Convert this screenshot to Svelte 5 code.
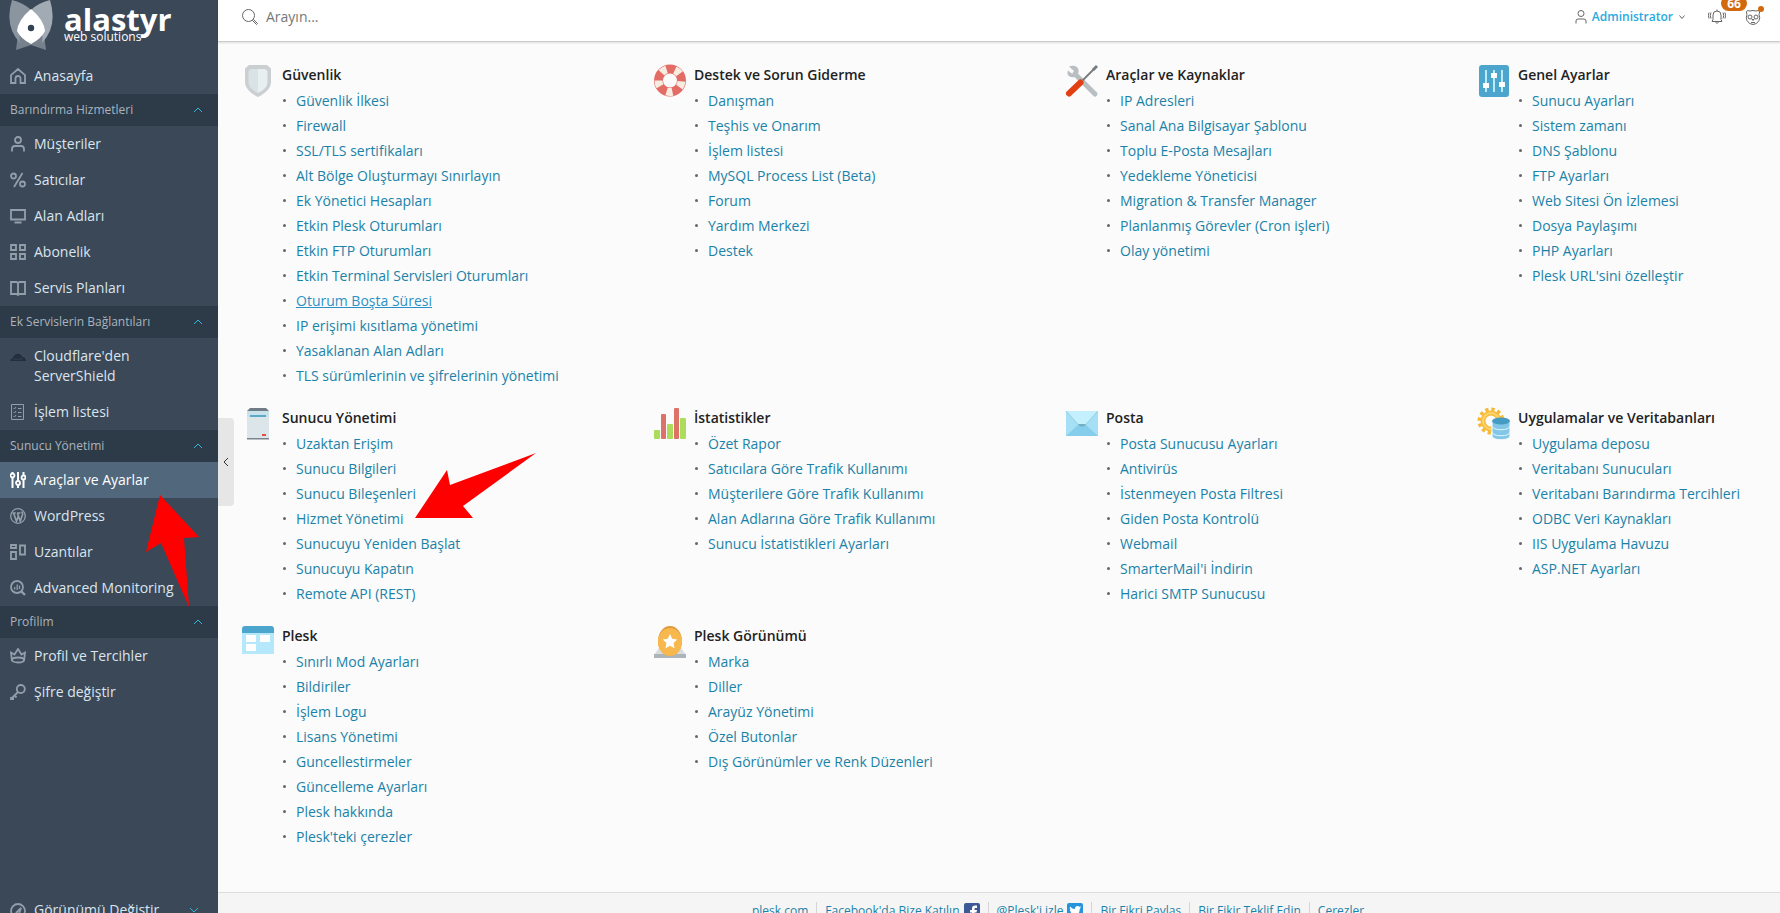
<script lang="ts">
    type Item = { label: string; icon: string; active?: boolean };
    type Group = { title?: string; items: Item[] };
    type Section = { title: string; icon: string; links: string[] };

    const nav: Group[] = [
        { items: [{ label: "Anasayfa", icon: "home" }] },
        {
            title: "Barındırma Hizmetleri",
            items: [
                { label: "Müşteriler", icon: "user" },
                { label: "Satıcılar", icon: "percent" },
                { label: "Alan Adları", icon: "screen" },
                { label: "Abonelik", icon: "grid" },
                { label: "Servis Planları", icon: "book" },
            ],
        },
        {
            title: "Ek Servislerin Bağlantıları",
            items: [
                { label: "Cloudflare'den ServerShield", icon: "cloud" },
                { label: "İşlem listesi", icon: "checklist" },
            ],
        },
        {
            title: "Sunucu Yönetimi",
            items: [
                { label: "Araçlar ve Ayarlar", icon: "sliders", active: true },
                { label: "WordPress", icon: "wordpress" },
                { label: "Uzantılar", icon: "extensions" },
                { label: "Advanced Monitoring", icon: "monitoring" },
            ],
        },
        {
            title: "Profilim",
            items: [
                { label: "Profil ve Tercihler", icon: "crown" },
                { label: "Şifre değiştir", icon: "key" },
            ],
        },
    ];

    const sections: Section[] = [
        {
            title: "Güvenlik",
            icon: "shield",
            links: [
                "Güvenlik İlkesi",
                "Firewall",
                "SSL/TLS sertifikaları",
                "Alt Bölge Oluşturmayı Sınırlayın",
                "Ek Yönetici Hesapları",
                "Etkin Plesk Oturumları",
                "Etkin FTP Oturumları",
                "Etkin Terminal Servisleri Oturumları",
                "Oturum Boşta Süresi",
                "IP erişimi kısıtlama yönetimi",
                "Yasaklanan Alan Adları",
                "TLS sürümlerinin ve şifrelerinin yönetimi",
            ],
        },
        {
            title: "Destek ve Sorun Giderme",
            icon: "lifebuoy",
            links: [
                "Danışman",
                "Teşhis ve Onarım",
                "İşlem listesi",
                "MySQL Process List (Beta)",
                "Forum",
                "Yardım Merkezi",
                "Destek",
            ],
        },
        {
            title: "Araçlar ve Kaynaklar",
            icon: "tools",
            links: [
                "IP Adresleri",
                "Sanal Ana Bilgisayar Şablonu",
                "Toplu E-Posta Mesajları",
                "Yedekleme Yöneticisi",
                "Migration & Transfer Manager",
                "Planlanmış Görevler (Cron işleri)",
                "Olay yönetimi",
            ],
        },
        {
            title: "Genel Ayarlar",
            icon: "settings",
            links: [
                "Sunucu Ayarları",
                "Sistem zamanı",
                "DNS Şablonu",
                "FTP Ayarları",
                "Web Sitesi Ön İzlemesi",
                "Dosya Paylaşımı",
                "PHP Ayarları",
                "Plesk URL'sini özelleştir",
            ],
        },
        {
            title: "Sunucu Yönetimi",
            icon: "server",
            links: [
                "Uzaktan Erişim",
                "Sunucu Bilgileri",
                "Sunucu Bileşenleri",
                "Hizmet Yönetimi",
                "Sunucuyu Yeniden Başlat",
                "Sunucuyu Kapatın",
                "Remote API (REST)",
            ],
        },
        {
            title: "İstatistikler",
            icon: "stats",
            links: [
                "Özet Rapor",
                "Satıcılara Göre Trafik Kullanımı",
                "Müşterilere Göre Trafik Kullanımı",
                "Alan Adlarına Göre Trafik Kullanımı",
                "Sunucu İstatistikleri Ayarları",
            ],
        },
        {
            title: "Posta",
            icon: "mail",
            links: [
                "Posta Sunucusu Ayarları",
                "Antivirüs",
                "İstenmeyen Posta Filtresi",
                "Giden Posta Kontrolü",
                "Webmail",
                "SmarterMail'i İndirin",
                "Harici SMTP Sunucusu",
            ],
        },
        {
            title: "Uygulamalar ve Veritabanları",
            icon: "database",
            links: [
                "Uygulama deposu",
                "Veritabanı Sunucuları",
                "Veritabanı Barındırma Tercihleri",
                "ODBC Veri Kaynakları",
                "IIS Uygulama Havuzu",
                "ASP.NET Ayarları",
            ],
        },
        {
            title: "Plesk",
            icon: "plesk",
            links: [
                "Sınırlı Mod Ayarları",
                "Bildiriler",
                "İşlem Logu",
                "Lisans Yönetimi",
                "Guncellestirmeler",
                "Güncelleme Ayarları",
                "Plesk hakkında",
                "Plesk'teki çerezler",
            ],
        },
        {
            title: "Plesk Görünümü",
            icon: "branding",
            links: [
                "Marka",
                "Diller",
                "Arayüz Yönetimi",
                "Özel Butonlar",
                "Dış Görünümler ve Renk Düzenleri",
            ],
        },
    ];

    const highlighted = "Oturum Boşta Süresi";

    // 16x16, stroked with currentColor
    const navIcons: Record<string, string> = {
        home: `<path d="M1 7.2 8 1l7 6.2V15h-4.5v-4.500a2.500 2.500 0 0 0-5 0V15H1z"/>`,
        user: `<circle cx="8" cy="4" r="3"/><path d="M2 15.500V13a3 3 0 0 1 3-3h6a3 3 0 0 1 3 3v2.500"/>`,
        percent: `<circle cx="3.500" cy="4" r="2.500"/><circle cx="12.500" cy="12" r="2.500"/><path d="M12.500 1 4 15"/>`,
        screen: `<path d="M1 2h14v9.500H1zM4.500 14.500h7"/>`,
        grid: `<path d="M1 1h5v5H1zM10 1h5v5h-5zM1 10h5v5H1zM10 10h5v5h-5z"/>`,
        book: `<path d="M1 2h5.500L8 3l1.500-1H15v12H9.500L8 15l-1.500-1H1zM8 3v12"/>`,
        cloud: `<path d="M0 13c.2-1.700 1.200-2.600 2.600-2.500C3.200 7.700 5.600 5.500 8.200 5.700c2 .1 3.600 1.500 4.200 3.400 2-.2 3.500 1.600 3.600 3.900z" fill="#232f3c" stroke="none"/><path d="M3 11.200h8.500l.6-1.800" stroke="#3b4858" stroke-width=".7"/>`,
        checklist: `<g stroke-width="1"><path d="M1.500.5h12v15h-12z"/><path d="m3.500 4 1 1 1.500-2M3.500 8l1 1L6 7M3.500 12l1 1L6 11M8 4.500h3.500M8 8.500h3.500M8 12.500h3.500"/></g>`,
        sliders: `<path d="M2.500 6v10M8 0v8.500M8 13.500V16M13.500 0v3M13.500 8v8M2.500 0v1" stroke-width="2"/><circle cx="2.500" cy="3.500" r="2"/><circle cx="8" cy="11" r="2"/><circle cx="13.500" cy="5.500" r="2"/>`,
        wordpress: `<circle cx="8" cy="8" r="7.300" stroke-width="1.300"/><path d="M2.500 5h3.300M7 5h3.500M3.600 5.200l2.900 8 2-5.500M7.400 5.200l2.900 8 2.300-7c.2-1.200-.8-1.700-.8-2.700" stroke-width="1.700"/>`,
        extensions: `<path d="M1 1h5v3H1zM1 8h5v7H1zM10 1.500h5v9h-5z"/>`,
        monitoring: `<circle cx="7" cy="7" r="6"/><path d="m11.300 11.300 3.700 3.700" stroke-width="2.400"/><path d="M4.700 7v2.500M7.200 4.500V10M9.500 5.500V9" stroke-width="1.300"/>`,
        crown: `<path d="M2 13 1 4.500l3.500 2L8 1l3.500 5.500 3.500-2L14 13"/><ellipse cx="8" cy="12" rx="6" ry="2.500"/>`,
        key: `<circle cx="10.800" cy="5" r="4"/><path d="m8 8-7 7M1 13v2h3M4.500 11.500l2 2" />`,
        gauge: `<circle cx="8" cy="8" r="7"/><path d="M6.500 9.500 11 5l-2 6-3 .5z"/>`,
    };

    // 32x32, full colour
    const sectionIcons: Record<string, string> = {
        shield: `<path d="M7 0h18l4 3.500V17c0 6-5 11-13 15C8 28 3 23 3 17V3.500z" fill="#cbcfd1"/><path d="M16 4H9L6.500 6v11c0 4.500 3.500 8 9.500 11z" fill="#d9e2e5"/><path d="M16 4h7l2.500 2v11c0 4.500-3.500 8-9.500 11z" fill="#e7eff1"/>`,
        lifebuoy: `<circle cx="16" cy="15.500" r="11.500" fill="none" stroke="#e46c67" stroke-width="9"/><circle cx="16" cy="15.500" r="11.500" fill="none" stroke="#f6ecdf" stroke-width="8" stroke-dasharray="6 8.450" stroke-dashoffset="-1"/>`,
        tools: `<path d="m9 9 20 20" stroke="#b9bec2" stroke-width="5" stroke-linecap="round"/><path d="M3 1.500 8 6l-1.500 3L2 5.500C0 10 3.500 13 8.500 12l4-4.500C13.500 2.500 9-.5 3 1.500z" fill="#b9bec2"/><path d="M16.500 15.500 28 4" stroke="#747a7e" stroke-width="1.800"/><path d="m26 4 4-4 2 2-4 4z" fill="#747a7e"/><path d="M3 28.500 14.500 17.500" stroke="#e23f13" stroke-width="6" stroke-linecap="round"/>`,
        settings: `<rect x="1" width="30" height="32" rx="3" fill="#4ba5cd"/><path d="M8 5v22M16 5v22M24 5v22" stroke="#b9ebfb" stroke-width="2"/><path d="M5 18h6v5H5zM13 8h6v5h-6zM21 17h6v5h-6z" fill="#fff"/>`,
        server: `<path d="M8 0h16l3 3v4H5V3z" fill="#6f7c85"/><path d="M5 3h22v28H5z" fill="#dce6ea"/><path d="M5 3h22v6H5z" fill="#c9e1ea"/><path d="M5 30h22v1.500H5z" fill="#78858e"/><path d="M8 7h16v2H8z" fill="#5ba9c9"/><path d="M20 26h4v2h-4z" fill="#e3503f"/>`,
        stats: `<rect y="22" width="6" height="9" rx="1" fill="#addc5b"/><rect x="7" y="6" width="5" height="25" rx="1" fill="#dd7269"/><rect x="13" y="16" width="6" height="15" rx="1" fill="#addc5b"/><rect x="20" width="5" height="31" rx="1" fill="#dd7269"/><rect x="26" y="10" width="6" height="21" rx="1" fill="#addc5b"/>`,
        mail: `<path d="M0 3h32v25H0z" fill="#a6e0f7"/><path d="M0 28 13 16h6l13 12z" fill="#86cdec"/><path d="M0 3h32L19 17.500h-6z" fill="#c4effd"/><path d="m0 3 13 14.500h6L32 3" fill="none" stroke="#92cde0"/><path d="M12 16h8l-2 2.500h-4z" fill="#71afc7"/>`,
        database: `<circle cx="13" cy="13" r="11.500" fill="none" stroke="#f5b935" stroke-width="4" stroke-dasharray="3.200 2.820"/><circle cx="13" cy="13" r="8" fill="none" stroke="#f8bd3e" stroke-width="5"/><circle cx="13" cy="13" r="8" fill="none" stroke="#fcd36c" stroke-width="2"/><path d="M14 13v15c0 5 18 5 18 0V13z" fill="#82c7e8" stroke="#fbfbfb"/><ellipse cx="23" cy="13" rx="9" ry="3.500" fill="#459bc1"/><path d="M14 18c0 5 18 5 18 0M14 24c0 5 18 5 18 0" fill="none" stroke="#e0f6ff"/>`,
        plesk: `<path d="M0 5h32v23H0z" fill="#b4e8fa"/><path d="M0 7V3q0-3 3-3h26q3 0 3 3v4z" fill="#4ca5cc"/><path d="M4 9h10v7H4zM18 9h10v7H18zM4 18h10v7H4z" fill="#fff"/>`,
        branding: `<path d="m5 22-5 7h32l-5-7z" fill="#d7dce0"/><path d="M0 28h32v4H0z" fill="#adb5ba"/><ellipse cx="16" cy="15" rx="12" ry="15" fill="#df9939"/><ellipse cx="16" cy="16" rx="12" ry="14" fill="#f7b94e"/><path d="m16 8 2.200 4.800 5 .7-3.600 3.600.9 5.100L16 19.700l-4.500 2.500.9-5.100-3.600-3.600 5-.7z" fill="#fff"/>`,
    };
</script>

{#snippet navIcon(name: string)}
    <svg
        class="nav-icon"
        viewBox="0 0 16 16"
        fill="none"
        stroke="currentColor"
        stroke-width="1.800"
        aria-hidden="true">{@html navIcons[name]}</svg
    >
{/snippet}

{#snippet chevron(d: string)}
    <svg class="chevron" viewBox="0 0 10 10" aria-hidden="true">
        <path {d} fill="none" stroke="currentColor" />
    </svg>
{/snippet}

<div class="page">
    <aside class="sidebar">
        <a class="logo" href="#home">
            <svg class="logo-mark" viewBox="0 0 44 52" aria-hidden="true">
                <path d="M9 34 7 50l15-5 15 5-2-16z" fill="#76818d" />
                <path
                    d="M3 0q12 3 19 10-14 13-11 33Q-5 26 3 0z"
                    fill="#8b959f"
                />
                <path
                    d="M41 0q-12 3-19 10 14 13 11 33Q49 26 41 0z"
                    fill="#a2abb3"
                />
                <path
                    d="M22 9Q9 20 8 31q4 8 14 13 10-5 14-13Q35 20 22 9z"
                    fill="#fff"
                />
                <circle cx="22" cy="28" r="3.200" fill="#324253" />
            </svg>
            <span class="logo-text">
                <strong>alastyr</strong>
                <small>web solutions</small>
            </span>
        </a>

        <nav>
            {#each nav as group}
                {#if group.title}
                    <button class="group-title">
                        {group.title}
                        {@render chevron("M1 7l4-4 4 4")}
                    </button>
                {/if}
                {#each group.items as item}
                    <a href="#nav" class="nav-item" class:active={item.active}>
                        {@render navIcon(item.icon)}
                        <span>{item.label}</span>
                    </a>
                {/each}
            {/each}
        </nav>

        <button class="nav-item view-switch">
            {@render navIcon("gauge")}
            <span>Görünümü Değiştir</span>
            {@render chevron("M1 3l4 4 4-4")}
        </button>
    </aside>

    <div class="content">
        <header class="topbar">
            <label class="search">
                <svg viewBox="0 0 16 16" aria-label="Ara">
                    <circle cx="6.500" cy="6.500" r="6" />
                    <path d="m10.500 11.500 1-1 4 4-1 1z" />
                </svg>
                <input type="text" placeholder="Arayın..." />
            </label>

            <div class="account">
                <button class="user-menu">
                    <svg class="user-icon" viewBox="0 0 12 14">
                        <circle cx="6" cy="3.500" r="3" />
                        <path d="M1 13.500V11q0-2 2-2h6q2 0 2 2v2.500" />
                    </svg>
                    <span>Administrator</span>
                    <svg class="caret" viewBox="0 0 8 8">
                        <path d="m1.500 2.500 2.500 3 2.500-3" />
                    </svg>
                </button>
                <button class="tool" aria-label="Bildirimler">
                    <svg viewBox="0 0 18 16">
                        <path
                            d="M4 12.500h10l-1-2V6a4 4 0 0 0-8 0v4.500zM7.500 13q1.500 3 3 0M9 2V.5M3 3.500Q1.500 6.500 3 9.500M1 3.500Q-.2 6.500 1 9.500M15 3.500q1.500 3 0 6M17 3.500q1.200 3 0 6"
                        />
                    </svg>
                    <span class="badge">66</span>
                </button>
                <button class="tool" aria-label="Danışman">
                    <svg viewBox="0 0 18 16">
                        <path
                            d="M3 5.500Q1.500 2.500 3.500 1.500L6 2q3-1 6 0l2.500-.5q2 1 .5 4 1.500 3.500 0 6-2 4-6 4t-6-4q-1.500-2.500 0-6zM8 10.500h2l-1 1zM7 13.500h4"
                        />
                        <circle cx="6" cy="8" r="2" />
                        <circle cx="12" cy="8" r="2" />
                    </svg>
                    <span class="dot"></span>
                </button>
            </div>
        </header>

        <main class="sections">
            {#each sections as section}
                <section>
                    <svg
                        class="section-icon"
                        viewBox="0 0 32 32"
                        aria-hidden="true">{@html sectionIcons[section.icon]}</svg
                    >
                    <div>
                        <h2>{section.title}</h2>
                        <ul>
                            {#each section.links as link}
                                <li>
                                    <a
                                        href="#tool"
                                        class:hover={link === highlighted}
                                        >{link}</a
                                    >
                                </li>
                            {/each}
                        </ul>
                    </div>
                </section>
            {/each}
        </main>

        <footer>
            <a href="#plesk">plesk.com</a>
            <a href="#facebook">
                Facebook'da Bize Katılın
                <svg viewBox="0 0 16 16">
                    <rect width="16" height="16" rx="2" fill="#3c5a96" />
                    <path
                        d="M8 16V9.500H6V7h2V5.500Q8 2.500 11 2.500h2V5h-1.500q-1 0-1 1v1H13l-.5 2.500h-2V16z"
                        fill="#fff"
                    />
                </svg>
            </a>
            <a href="#twitter">
                @Plesk'i izle
                <svg viewBox="0 0 16 16">
                    <rect width="16" height="16" rx="2" fill="#2494dc" />
                    <path
                        d="M3 3.500q2 2.500 5 2.500 0-3 2.500-3 1 0 1.800.8l1.700-.6-1 1.600 1-.2-1.200 1.300Q12.500 13 6.500 13 4 13 2.500 12q2 0 3.300-1-1.800-.3-2.300-1.700h1Q2.700 8.500 2.700 6.800l1 .2Q2.200 5.500 3 3.500z"
                        fill="#fff"
                    />
                </svg>
            </a>
            <a href="#share">Bir Fikri Paylaş</a>
            <a href="#suggest">Bir Fikir Teklif Edin</a>
            <a href="#cookies">Çerezler</a>
        </footer>
    </div>

    <button class="collapse" aria-label="Menüyü daralt">
        <svg viewBox="0 0 6 10"><path d="M5 1 1 5l4 4" /></svg>
    </button>

    <svg class="arrow arrow-menu" viewBox="0 0 53 112" aria-hidden="true">
        <path d="M14 0 53 42 38 43 43 112 15 48 0 57z" />
    </svg>
    <svg class="arrow arrow-link" viewBox="0 0 121 65" aria-hidden="true">
        <path d="M0 65 32 17 35 32 121 0 48 53 58 65z" />
    </svg>
</div>

<style>
    :global(body) {
        overflow: hidden;
    }

    .page {
        position: relative;
        display: flex;
        min-height: 100vh;
        background: #fbfbfb;
        color: #222;
        font-family: "Open Sans", sans-serif;
        font-size: 14px;
    }

    a {
        text-decoration: none;
    }

    button {
        margin: 0;
        padding: 0;
        border: 0;
        background: none;
        font: inherit;
        text-align: left;
    }

    .sidebar {
        display: flex;
        flex-direction: column;
        flex: none;
        width: 218px;
        background: #3a4858;
    }

    .logo {
        display: flex;
        gap: 11px;
        box-sizing: border-box;
        height: 58px;
        padding-left: 9px;
        color: #fff;
    }

    .logo-mark {
        width: 44px;
        height: 52px;
    }

    .logo-text {
        display: flex;
        flex-direction: column;
        padding-top: 5px;
    }

    .logo-text strong {
        font-size: 31px;
        line-height: 28px;
    }

    .logo-text small {
        font-size: 12px;
        line-height: 8px;
    }

    .group-title {
        display: flex;
        align-items: center;
        justify-content: space-between;
        box-sizing: border-box;
        width: 100%;
        height: 32px;
        padding: 0 15px 1px 10px;
        background: #2d3a48;
        color: #a9b4be;
        font-size: 12px;
    }

    .chevron {
        width: 10px;
        height: 10px;
        color: #2fb4e0;
    }

    .nav-item {
        display: flex;
        gap: 8px;
        box-sizing: border-box;
        width: 100%;
        padding: 8px 15px 8px 10px;
        color: #dbe5ee;
        font-weight: 500;
        line-height: 20px;
    }

    .nav-item.active {
        background: #51677b;
        color: #fff;
    }

    .nav-icon {
        flex: none;
        width: 16px;
        height: 16px;
        margin-top: 2px;
        color: #929faa;
    }

    .active .nav-icon {
        color: #fff;
    }

    .view-switch {
        align-items: center;
        margin-top: auto;
    }

    .view-switch .chevron {
        margin-left: auto;
        margin-right: 4px;
    }

    .content {
        display: flex;
        flex-direction: column;
        flex: 1;
        min-width: 0;
    }

    .topbar {
        display: flex;
        justify-content: space-between;
        box-sizing: border-box;
        height: 42px;
        padding: 0 18px 8px 24px;
        border-bottom: 1px solid #ccc;
        box-shadow: 0 1px 2px rgba(0, 0, 0, 0.12);
        background: #fff;
    }

    .topbar svg {
        fill: none;
        stroke: #666;
    }

    .search {
        display: flex;
        align-items: center;
        gap: 8px;
    }

    .search svg {
        width: 16px;
        height: 16px;
    }

    .search input {
        width: 320px;
        padding: 0;
        border: 0;
        outline: 0;
        background: none;
        color: #222;
        font: inherit;
    }

    .search input::placeholder {
        color: #777;
        opacity: 1;
    }

    .account {
        display: flex;
        align-items: center;
        gap: 18px;
    }

    .user-menu {
        display: flex;
        align-items: center;
        gap: 5px;
        margin-right: 4px;
        color: #28aade;
        font-size: 12px;
        font-weight: 600;
    }

    .user-icon {
        width: 12px;
        height: 14px;
    }

    .caret {
        width: 8px;
        height: 8px;
    }

    .tool {
        position: relative;
        display: flex;
    }

    .tool svg {
        width: 18px;
        height: 16px;
    }

    .badge {
        position: absolute;
        bottom: 14px;
        left: 13px;
        width: 26px;
        border-radius: 8px;
        background: #d2690f;
        color: #fff;
        font-size: 12px;
        font-weight: 700;
        line-height: 15px;
        text-align: center;
    }

    .dot {
        position: absolute;
        top: -3px;
        right: -2px;
        width: 6px;
        height: 6px;
        border-radius: 50%;
        background: #d2690f;
    }

    .sections {
        display: grid;
        grid-template-columns: repeat(4, minmax(0, 1fr));
        align-content: start;
        flex: 1;
        gap: 20px 134px;
        padding: 23px 24px 43px;
    }

    section {
        display: flex;
        align-items: flex-start;
        gap: 8px;
        white-space: nowrap;
    }

    .section-icon {
        flex: none;
        width: 32px;
        height: 32px;
        overflow: visible;
    }

    h2 {
        margin: 0 0 3px;
        font-size: 14px;
        font-weight: 600;
        line-height: 20px;
    }

    ul {
        margin: 0;
        padding: 0;
        list-style: none;
    }

    li {
        display: flex;
        align-items: center;
        gap: 10px;
        padding-left: 1px;
        line-height: 25px;
    }

    li::before {
        content: "";
        width: 3px;
        height: 3px;
        border-radius: 50%;
        background: #666;
    }

    li a,
    footer a {
        color: #1a82a8;
    }

    li a.hover {
        color: #2b91c4;
        text-decoration: underline;
    }

    footer {
        display: flex;
        align-items: center;
        justify-content: center;
        box-sizing: border-box;
        height: 36px;
        padding-left: 118px;
        border-top: 1px solid #ddd;
        background: #f5f5f5;
        font-size: 12px;
    }

    footer a {
        display: flex;
        align-items: center;
        gap: 4px;
        padding: 0 8px;
        line-height: 18px;
    }

    footer a + a {
        border-left: 1px solid #d5d5d5;
    }

    footer svg {
        width: 16px;
        height: 16px;
    }

    .collapse {
        position: absolute;
        top: 418px;
        left: 218px;
        display: flex;
        align-items: center;
        justify-content: center;
        width: 16px;
        height: 88px;
        border-radius: 0 4px 4px 0;
        background: #e6e6e6;
    }

    .collapse svg {
        width: 6px;
        height: 10px;
        fill: none;
        stroke: #333;
    }

    .arrow {
        position: absolute;
        fill: #fe0000;
        pointer-events: none;
    }

    .arrow-menu {
        top: 495px;
        left: 146px;
        width: 53px;
        height: 112px;
    }

    .arrow-link {
        top: 453px;
        left: 415px;
        width: 121px;
        height: 65px;
    }
</style>
